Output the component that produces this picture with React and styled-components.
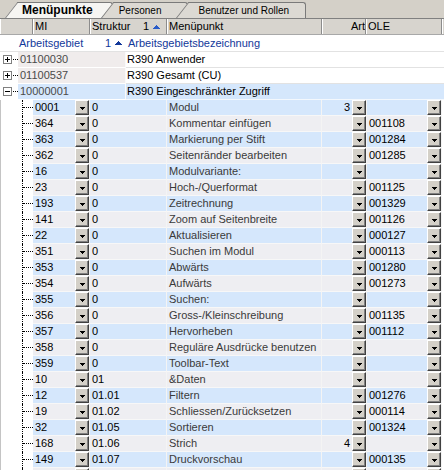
import React from 'react'
import styled, { createGlobalStyle } from 'styled-components'

const GlobalStyle = createGlobalStyle`
  html, body {
    margin: 0;
    padding: 0;
    background: #fff;
  }
  #root {
    width: 444px;
    height: 470px;
    overflow: hidden;
  }
`

const BLUE_ROW = '#d5e7fc'
const GRAY_ROW = '#eeeef2'
const COLS = '33px 57px 77px 155px 45px 75px 2px'

const Window = styled.div`
  width: 444px;
  height: 470px;
  overflow: hidden;
  background: #fff;
  font-family: 'Liberation Sans', Arial, sans-serif;
  font-size: 11px;
  color: #000;
  display: flex;
  flex-direction: column;
`

const TabBar = styled.div`
  display: flex;
  align-items: flex-end;
  height: 18px;
  flex: none;
  padding-left: 5px;
  background: #d4d0c8;
  box-sizing: border-box;
`

const Tab = styled.div`
  position: relative;
  z-index: ${p => p.$z};
  height: 16px;
  margin-left: ${p => (p.$first ? 0 : -12)}px;
  padding: 0 ${p => p.$pr}px 0 ${p => p.$pl}px;
  font-size: ${p => (p.$active ? 12 : 10)}px;
  font-weight: ${p => (p.$active ? 700 : 400)};
  line-height: 17px;
  white-space: nowrap;
  color: #000;

  &::before {
    content: '';
    position: absolute;
    z-index: -1;
    left: 0;
    top: 0;
    bottom: 0;
    width: 30px;
    background: ${p => (p.$active ? '#f6f5f2' : '#dcd9d3')};
    border-left: 1px solid #7a7a7a;
    border-top: 1px solid #7a7a7a;
    transform-origin: bottom left;
    transform: skewX(-38deg);
  }

  &::after {
    content: '';
    position: absolute;
    z-index: -1;
    left: 14px;
    right: 0;
    top: 0;
    bottom: 0;
    background: ${p => (p.$active ? '#f6f5f2' : '#dcd9d3')};
    border-top: 1px solid #7a7a7a;
    border-right: 1px solid #7a7a7a;
    border-top-right-radius: 3px;
  }
`

const HeadRow = styled.div`
  display: grid;
  grid-template-columns: 33px 57px 77px 155px 44px 76px 2px;
  height: 17px;
  flex: none;
  box-sizing: border-box;
  background: #d7d4ce;
  border-top: 1px solid #808080;
  border-bottom: 1px solid #a8a8a8;
`

const HeadCell = styled.div`
  display: flex;
  align-items: center;
  justify-content: ${p => (p.$right ? 'flex-end' : p.$spread ? 'space-between' : 'flex-start')};
  gap: 4px;
  padding: 0 ${p => (p.$right ? 0 : 1)}px 0 1px;
  border-left: 1px solid #fff;
  border-right: 1px solid #8c8c8c;
  box-sizing: border-box;
  line-height: 15px;
  white-space: nowrap;
  overflow: hidden;
`

const SortMark = styled.span`
  display: inline-flex;
  align-items: center;
  gap: 4px;
  margin-right: ${p => p.$mr || 0}px;
  color: ${p => p.$color || '#000'};
`

const GroupRow = styled.div`
  display: grid;
  grid-template-columns: 18px 109px 1fr;
  height: 17px;
  flex: none;
  box-sizing: border-box;
  border-bottom: 1px solid #e2e2e2;
  color: #12389a;
  line-height: 16px;
`

const GroupCell = styled.div`
  display: flex;
  justify-content: space-between;
  padding-left: 1px;
  white-space: nowrap;
`

const TopRow = styled.div`
  display: grid;
  grid-template-columns: 18px 108px 1fr;
  height: 16px;
  flex: none;
`

const Twig = styled.div`
  display: flex;
  align-items: flex-start;
  padding: 3px 0 0 3px;
  box-sizing: border-box;

  &::after {
    content: '';
    width: 5px;
    margin-top: 4px;
    margin-left: 1px;
    border-top: 1px dotted #000;
  }
`

const KeyCell = styled.div`
  background: ${p => (p.$open ? BLUE_ROW : '#f0ecec')};
  border-bottom: 1px solid #fff;
  border-right: 1px solid #fafafa;
  padding-left: 2px;
  line-height: 15px;
  color: #4a4a4a;
`

const NameCell = styled.div`
  background: ${p => (p.$open ? BLUE_ROW : '#fff')};
  border-bottom: 1px solid ${p => (p.$open ? '#f4f8fd' : '#e2e2e2')};
  padding-left: 1px;
  line-height: 15px;
  white-space: nowrap;
`

const Body = styled.div`
  display: flex;
  flex-direction: column;
`

const ChildRow = styled.div`
  display: grid;
  grid-template-columns: ${COLS};
  height: 16px;
  flex: none;
`

const Branch = styled.div`
  position: relative;
  border-left: 1px solid #c4c4c4;

  &::before {
    content: '';
    position: absolute;
    left: 21px;
    top: 0;
    bottom: 0;
    border-left: 1px dotted #000;
  }

  &::after {
    content: '';
    position: absolute;
    left: 22px;
    width: 10px;
    top: 7px;
    border-top: 1px dotted #000;
  }
`

const Cell = styled.div`
  display: flex;
  align-items: center;
  justify-content: ${p => (p.$right ? 'flex-end' : 'space-between')};
  gap: 2px;
  background: ${p => p.$bg};
  border-bottom: 1px solid #f7f7f7;
  border-right: 1px solid #f4f4f4;
  padding-left: 2px;
  line-height: 15px;
  white-space: nowrap;
  overflow: hidden;
  color: ${p => p.$color || '#000'};
`

const Filler = styled.div`
  background: #fff;
`

const DropButton = styled.span`
  flex: none;
  display: inline-flex;
  align-items: center;
  justify-content: center;
  width: 14px;
  height: 15px;
  box-sizing: border-box;
  padding-top: 2px;
  background: #d4d0c8;
  border: 1px solid;
  border-color: #fff #404040 #404040 #fff;
  box-shadow: inset -1px -1px 0 #808080;
`

const Arrow = () => (
  <svg width="5" height="3" viewBox="0 0 5 3" shapeRendering="crispEdges">
    <rect x="0" y="0" width="5" height="1" fill="#000" />
    <rect x="1" y="1" width="3" height="1" fill="#000" />
    <rect x="2" y="2" width="1" height="1" fill="#000" />
  </svg>
)

const UpTriangle = ({ color }) => (
  <svg width="7" height="4" viewBox="0 0 7 4" shapeRendering="crispEdges">
    <rect x="3" y="0" width="1" height="1" fill={color} />
    <rect x="2" y="1" width="3" height="1" fill={color} />
    <rect x="1" y="2" width="5" height="1" fill={color} />
    <rect x="0" y="3" width="7" height="1" fill={color} />
  </svg>
)

const ExpandBox = ({ open }) => (
  <svg width="9" height="9" viewBox="0 0 9 9" shapeRendering="crispEdges">
    <rect x="0.5" y="0.5" width="8" height="8" fill="#fff" stroke="#808080" />
    <rect x="2" y="4" width="5" height="1" fill="#000" />
    {!open && <rect x="4" y="2" width="1" height="5" fill="#000" />}
  </svg>
)

const groups = [
  { key: '01100030', name: 'R390 Anwender' },
  { key: '01100537', name: 'R390 Gesamt (CU)' },
  { key: '10000001', name: 'R390 Eingeschränkter Zugriff', open: true },
]

const items = [
  ['0001', '0', 'Modul', '3', ''],
  ['364', '0', 'Kommentar einfügen', '', '001108'],
  ['363', '0', 'Markierung per Stift', '', '001284'],
  ['362', '0', 'Seitenränder bearbeiten', '', '001285'],
  ['16', '0', 'Modulvariante:', '', ''],
  ['23', '0', 'Hoch-/Querformat', '', '001125'],
  ['193', '0', 'Zeitrechnung', '', '001329'],
  ['141', '0', 'Zoom auf Seitenbreite', '', '001126'],
  ['22', '0', 'Aktualisieren', '', '000127'],
  ['351', '0', 'Suchen im Modul', '', '000113'],
  ['353', '0', 'Abwärts', '', '001280'],
  ['354', '0', 'Aufwärts', '', '001273'],
  ['355', '0', 'Suchen:', '', ''],
  ['356', '0', 'Gross-/Kleinschreibung', '', '001135'],
  ['357', '0', 'Hervorheben', '', '001112'],
  ['358', '0', 'Reguläre Ausdrücke benutzen', '', ''],
  ['359', '0', 'Toolbar-Text', '', ''],
  ['10', '01', '&Daten', '', ''],
  ['12', '01.01', 'Filtern', '', '001276'],
  ['19', '01.02', 'Schliessen/Zurücksetzen', '', '000114'],
  ['32', '01.05', 'Sortieren', '', '001324'],
  ['168', '01.06', 'Strich', '4', ''],
  ['149', '01.07', 'Druckvorschau', '', '000135'],
  ['', '', '', '', ''],
]

export default function App() {
  return (
    <Window>
      <GlobalStyle />
      <TabBar>
        <Tab $first $active $z={1} $pl={17} $pr={20}>Menüpunkte</Tab>
        <Tab $z={2} $pl={18} $pr={27}>Personen</Tab>
        <Tab $z={3} $pl={22} $pr={17}>Benutzer und Rollen</Tab>
      </TabBar>

      <HeadRow>
        <HeadCell />
        <HeadCell>MI</HeadCell>
        <HeadCell $spread>
          Struktur
          <SortMark $mr={5}>
            1 <UpTriangle color="#2a5cc8" />
          </SortMark>
        </HeadCell>
        <HeadCell>Menüpunkt</HeadCell>
        <HeadCell $right>Art</HeadCell>
        <HeadCell>OLE</HeadCell>
        <HeadCell />
      </HeadRow>

      <GroupRow>
        <div />
        <GroupCell>
          Arbeitsgebiet
          <SortMark $mr={5} $color="#12389a">
            1 <UpTriangle color="#12389a" />
          </SortMark>
        </GroupCell>
        <GroupCell>Arbeitsgebietsbezeichnung</GroupCell>
      </GroupRow>

      <Body>
        {groups.map(g => (
          <TopRow key={g.key}>
            <Twig>
              <ExpandBox open={g.open} />
            </Twig>
            <KeyCell $open={g.open}>{g.key}</KeyCell>
            <NameCell $open={g.open}>{g.name}</NameCell>
          </TopRow>
        ))}

        {items.map(([mi, struktur, name, art, ole], i) => {
          const bg = i % 2 === 0 ? BLUE_ROW : GRAY_ROW
          return (
            <ChildRow key={i}>
              <Branch />
              <Cell $bg={bg}>
                <span>{mi}</span>
                <DropButton><Arrow /></DropButton>
              </Cell>
              <Cell $bg={bg}>{struktur}</Cell>
              <Cell $bg={bg} $color="#3a3a3a">{name}</Cell>
              <Cell $bg={bg} $right>
                <span>{art}</span>
                <DropButton><Arrow /></DropButton>
              </Cell>
              <Cell $bg={bg}>
                <span>{ole}</span>
                <DropButton><Arrow /></DropButton>
              </Cell>
              <Filler />
            </ChildRow>
          )
        })}
      </Body>
    </Window>
  )
}
